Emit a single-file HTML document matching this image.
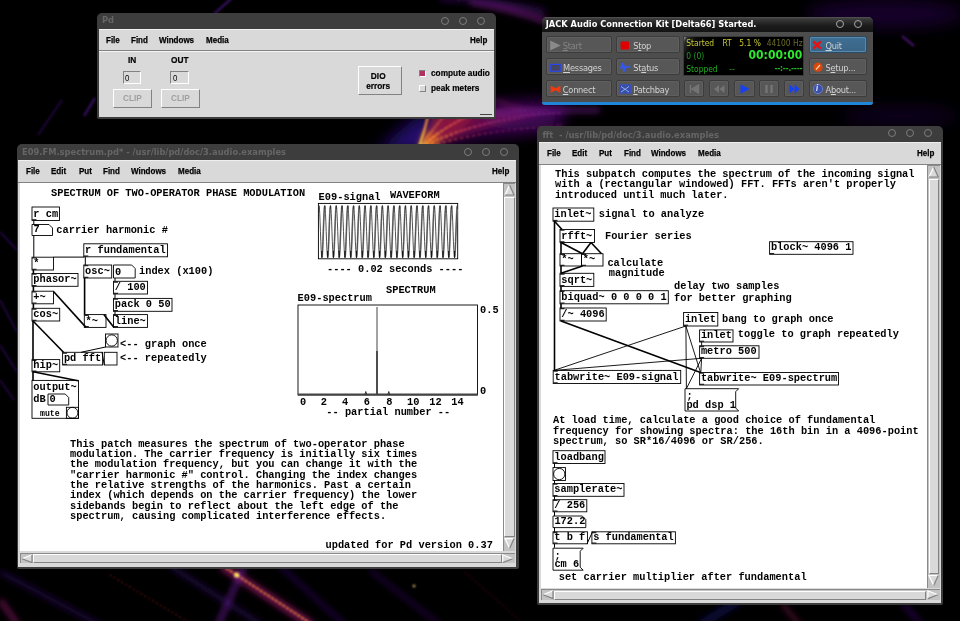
<!DOCTYPE html>
<html><head><meta charset="utf-8"><title>desktop</title>
<style>
html,body{margin:0;padding:0;}
body{width:960px;height:621px;overflow:hidden;background:#000;position:relative;font-family:"Liberation Sans",sans-serif;}
.abs,.abs div,.abs svg{position:absolute;box-sizing:border-box;}
.bg{left:0;top:0;width:960px;height:621px;overflow:hidden;}
.win{background:#3d3d3d;border-radius:5px 5px 2px 2px;}
.ttl{color:#666;font:bold 9.27px "DejaVu Sans Condensed","DejaVu Sans",sans-serif;font-stretch:condensed;white-space:pre;line-height:12px;}
.circ{width:8.2px;height:8.2px;border:1.9px solid #7c7c7c;border-radius:50%;}
.mbar{background:#d9d9d9;border-bottom:1px solid #828282;border-top:1px solid #efefef;}
.mi{font:bold 9px "Liberation Sans",sans-serif;color:#000;white-space:nowrap;line-height:10px;transform-origin:0 0;transform:scaleX(.89);-webkit-text-stroke:0.25px #000;}
.cv{background:#fff;}
.sb{background:#c3c3c3;}
.gray{background:#d9d9d9;}
.raised{background:#d9d9d9;border:1.5px solid;border-color:#fff #828282 #828282 #fff;}
.sunken{background:#d9d9d9;border:1.5px solid;border-color:#828282 #fff #fff #828282;}
.lbl{font:bold 9px "Liberation Sans",sans-serif;color:#000;white-space:nowrap;line-height:10px;transform-origin:0 0;transform:scaleX(.92);-webkit-text-stroke:0.2px #000;}
svg text.m{font:bold 10.33px "Liberation Mono",monospace;fill:#000;white-space:pre;}
svg text.ms{font:bold 8.2px "Liberation Mono",monospace;fill:#000;white-space:pre;}
svg .b{fill:none;stroke:#000;stroke-width:0.9;}
.jb{background:#575757;border:1px solid #3c3c3c;border-radius:2px;box-shadow:inset 0 0 0 1px #5f5f5f;}
.jt{letter-spacing:-0.25px;font:9.2px "DejaVu Sans Condensed","DejaVu Sans",sans-serif;font-stretch:condensed;color:#d0d0d0;white-space:nowrap;line-height:11px;}
.jd{font:8.4px "DejaVu Sans Condensed","DejaVu Sans",sans-serif;font-stretch:condensed;white-space:nowrap;line-height:10px;}
</style></head><body>
<div class="abs bg">
<svg width="960" height="621" viewBox="0 0 960 621" style="left:0;top:0;">
<defs>
<filter id="b1" x="-20%" y="-20%" width="140%" height="140%"><feGaussianBlur stdDeviation="1"/></filter>
<filter id="b3" x="-20%" y="-20%" width="140%" height="140%"><feGaussianBlur stdDeviation="3"/></filter>
<filter id="b8" x="-30%" y="-30%" width="160%" height="160%"><feGaussianBlur stdDeviation="8"/></filter>
<radialGradient id="g1" cx="0" cy="1" r="1"><stop offset="0" stop-color="#ff9a10" stop-opacity=".95"/><stop offset=".18" stop-color="#e0304a" stop-opacity=".8"/><stop offset=".45" stop-color="#8a1080" stop-opacity=".6"/><stop offset=".8" stop-color="#3a0878" stop-opacity=".35"/><stop offset="1" stop-color="#200050" stop-opacity="0"/></radialGradient>
<radialGradient id="gs" gradientUnits="userSpaceOnUse" cx="419" cy="148" r="150"><stop offset="0" stop-color="#ffe050"/><stop offset=".12" stop-color="#ffb030"/><stop offset=".28" stop-color="#f0604a"/><stop offset=".5" stop-color="#d03a78"/><stop offset="1" stop-color="#9a2a90"/></radialGradient>
</defs>
<!-- fan of streaks between Pd and E09 windows -->
<g filter="url(#b8)">
 <path d="M425,150 L470,104 L565,98 L565,126 L520,134 Z" fill="#4a0a6a" opacity=".6"/>
 <path d="M375,152 L415,118 L450,112 L430,152 Z" fill="#2a0a80" opacity=".85"/>
</g>
<g filter="url(#b3)">
 <path d="M422,148 L440,112 L500,110 L540,114 L470,134 Z" fill="#a01850" opacity=".5"/>
 <path d="M418,150 L424,132 L440,134 L436,150 Z" fill="#ff8a18" opacity=".8"/>
 <path d="M420,148 L432,114 L480,112 L450,140 Z" fill="#b0203a" opacity=".5"/>
</g>
<g filter="url(#b1)" fill="none" stroke-linecap="round">
 <path d="M419,147 Q425,130 429,112" stroke="url(#gs)" stroke-width="2.2" opacity=".95"/>
 <path d="M421,147 Q440,130 466,117" stroke="url(#gs)" stroke-width="1.5" opacity=".9" stroke-dasharray="3 2"/>
 <path d="M420,147 Q432,130 446,114" stroke="url(#gs)" stroke-width="1.3" opacity=".8" stroke-dasharray="2 2"/>
 <path d="M423,147 Q452,130 500,121 T560,113" stroke="url(#gs)" stroke-width="1.4" opacity=".8" stroke-dasharray="2 3"/>
 <path d="M426,147 Q470,134 520,129 T560,125" stroke="url(#gs)" stroke-width="1.3" opacity=".65" stroke-dasharray="2 4"/>
 <path d="M440,140 Q480,122 540,112" stroke="url(#gs)" stroke-width="1.2" opacity=".55" stroke-dasharray="2 4"/>
</g>
<!-- faint haze -->
<g filter="url(#b8)">
 <ellipse cx="885" cy="14" rx="80" ry="14" fill="#2a0850" opacity=".55"/>
 <ellipse cx="900" cy="116" rx="60" ry="9" fill="#2a0850" opacity=".4"/>
 <ellipse cx="520" cy="118" rx="40" ry="12" fill="#5a1070" opacity=".5"/>
</g>
<!-- top streaks between Pd and JACK -->
<g filter="url(#b3)" fill="none">
 <path d="M470,2 Q510,8 548,22" stroke="#8a209a" stroke-width="5" opacity=".65"/>
 <path d="M496,100 Q520,112 545,110" stroke="#a02a7a" stroke-width="3" opacity=".5"/>
 <path d="M440,-2 Q500,0 545,12" stroke="#4a0f80" stroke-width="6" opacity=".5"/>
 <path d="M493,114 Q530,110 600,110" stroke="#7a1a9a" stroke-width="5" opacity=".6"/>
</g>
<path d="M232,-2 L214,14 M95,98 L84,116" stroke="#5a1aa0" stroke-width="2.5" opacity=".55" filter="url(#b1)" fill="none"/>
<path d="M902,36 L914,46" stroke="#6a1aa0" stroke-width="2.5" opacity=".6" filter="url(#b1)"/>
<path d="M62,100 L38,135 M0,300 L17,332 M0,232 L17,250 M0,345 L17,372 M0,380 L14,400" stroke="#4a1090" stroke-width="2" opacity=".45" filter="url(#b1)" fill="none"/>
<!-- bottom streaks -->
<g filter="url(#b3)" fill="none">
 <path d="M222,566 L312,625" stroke="#a01a70" stroke-width="7" opacity=".8"/>
 <path d="M244,566 L218,625" stroke="#7a24b0" stroke-width="4" opacity=".75"/>
 <path d="M0,572 L100,625" stroke="#4a1898" stroke-width="3" opacity=".65"/>
 <path d="M170,566 L262,625" stroke="#4a1898" stroke-width="3" opacity=".65"/>
 <path d="M280,566 L345,625" stroke="#4a1898" stroke-width="3" opacity=".6"/>
 <path d="M370,570 L440,625" stroke="#4a1090" stroke-width="3" opacity=".5"/>
 <path d="M0,600 L18,625" stroke="#c0208a" stroke-width="4" opacity=".6"/>
 <path d="M700,625 L740,600" stroke="#1a1a70" stroke-width="8" opacity=".5"/>
 <path d="M782,604 L800,625" stroke="#a02060" stroke-width="3" opacity=".6"/>
 <path d="M903,604 L922,625" stroke="#4a1090" stroke-width="4" opacity=".55"/>
</g>
<g filter="url(#b1)" fill="none">
 <path d="M226,568 L310,623" stroke="#ffa030" stroke-width="1.8" opacity=".9" stroke-dasharray="3 1.5"/>
 <path d="M110,575 L190,623" stroke="#c03030" stroke-width="1.2" opacity=".7" stroke-dasharray="1.5 3"/>
 <path d="M465,572 L520,621" stroke="#a02040" stroke-width="1.2" opacity=".55" stroke-dasharray="1.5 3"/>
 <circle cx="236.7" cy="575" r="2.6" fill="#ffe060" stroke="none"/>
 <circle cx="414" cy="586" r="1.2" fill="#ffd080" stroke="none"/>
</g>
</svg>
</div>

<!-- ===== Pd main window ===== -->
<div class="abs win" style="left:97px;top:13px;width:399px;height:106px;">
 <div class="ttl" style="left:5px;top:1.4px;">Pd</div>
 <div class="circ" style="left:344px;top:3.5px;"></div>
 <div class="circ" style="left:362px;top:3.5px;"></div>
 <div class="circ" style="left:380px;top:3.5px;"></div>
 <div class="gray" style="left:2px;top:15.6px;width:394.6px;height:88px;"></div>
 <div class="mbar" style="left:2px;top:15.6px;width:394.6px;height:22.6px;"></div>
 <div style="left:2px;top:38.2px;width:394.6px;height:1px;background:#f4f4f4;"></div>
 <div class="mi" style="left:9.3px;top:22px;">File</div>
 <div class="mi" style="left:34.3px;top:22px;">Find</div>
 <div class="mi" style="left:61.8px;top:22px;">Windows</div>
 <div class="mi" style="left:109.3px;top:22px;">Media</div>
 <div class="mi" style="left:372.5px;top:22px;">Help</div>
 <div class="lbl" style="left:31px;top:41.6px;">IN</div>
 <div class="lbl" style="left:74.3px;top:41.6px;">OUT</div>
 <div class="sunken" style="left:25.5px;top:57.5px;width:18.6px;height:13.6px;"></div>
 <div class="sunken" style="left:73px;top:57.5px;width:18.6px;height:13.6px;"></div>
 <div class="lbl" style="left:28.2px;top:59.6px;font-size:8.5px;font-weight:normal;-webkit-text-stroke:0;">0</div>
 <div class="lbl" style="left:75.7px;top:59.6px;font-size:8.5px;font-weight:normal;-webkit-text-stroke:0;">0</div>
 <div class="raised" style="left:16px;top:75.7px;width:38.5px;height:19px;"></div>
 <div class="raised" style="left:64.2px;top:75.7px;width:38.5px;height:19px;"></div>
 <div class="lbl" style="left:25.8px;top:80px;color:#a0a0a0;font-weight:bold;-webkit-text-stroke:0;">CLIP</div>
 <div class="lbl" style="left:74px;top:80px;color:#a0a0a0;font-weight:bold;-webkit-text-stroke:0;">CLIP</div>
 <div class="raised" style="left:260.5px;top:53.2px;width:44px;height:29px;"></div>
 <div class="lbl" style="left:260.5px;top:57.5px;width:44px;text-align:center;">DIO</div>
 <div class="lbl" style="left:260.5px;top:67.5px;width:44px;text-align:center;">errors</div>
 <div style="left:321.9px;top:57px;width:7.2px;height:7.4px;background:#b03060;border:1.2px solid;border-color:#828282 #fff #fff #828282;"></div>
 <div style="left:321.9px;top:72px;width:7.2px;height:7.4px;background:#d9d9d9;border:1.2px solid;border-color:#fff #828282 #828282 #fff;"></div>
 <div class="lbl" style="left:333.7px;top:54.8px;">compute audio</div>
 <div class="lbl" style="left:333.7px;top:70px;">peak meters</div>
 <div style="left:383px;top:100.8px;width:12px;height:1.6px;background:#444;"></div>
</div>

<!-- ===== JACK window ===== -->
<div class="abs" style="left:541.8px;top:16.8px;width:331.2px;height:87.8px;background:#4d4d4d;border-radius:5px 5px 3px 3px;overflow:hidden;">
 <div style="left:0;top:0;width:331px;height:15.2px;background:linear-gradient(#555 0,#3a3a3a 12%,#1b1b1b 60%,#141414 100%);"></div>
 <div style="left:0;top:84.9px;width:332px;height:3px;background:#1f86d8;"></div>
 <div style="left:4px;top:1.5px;font:bold 9.2px 'DejaVu Sans Condensed','DejaVu Sans',sans-serif;font-stretch:condensed;color:#fff;white-space:nowrap;line-height:12px;">JACK Audio Connection Kit [Delta66] Started.</div>
 <div class="circ" style="left:294.2px;top:2.8px;border-color:#a8a8a8;border-width:1.9px;width:8.2px;height:8.2px;"></div>
 <div class="circ" style="left:312.3px;top:2.8px;border-color:#a8a8a8;border-width:1.9px;width:8.2px;height:8.2px;"></div>
 <div class="jb" style="left:4px;top:19.1px;width:66.0px;height:17.4px;"></div>
<div class="jb" style="left:74.5px;top:19.1px;width:63.5px;height:17.4px;"></div>
<div class="jb" style="left:267px;top:19.1px;width:58.5px;height:17.4px;"></div>
<div class="jb" style="left:4px;top:41.3px;width:66.0px;height:17.2px;"></div>
<div class="jb" style="left:74.5px;top:41.3px;width:63.5px;height:17.2px;"></div>
<div class="jb" style="left:267px;top:41.3px;width:58.5px;height:17.2px;"></div>
<div class="jb" style="left:4px;top:63.3px;width:66.0px;height:17.1px;"></div>
<div class="jb" style="left:74.5px;top:63.3px;width:63.5px;height:17.1px;"></div>
<div class="jb" style="left:267px;top:63.3px;width:58.5px;height:17.1px;"></div>
<div class="jb" style="left:267px;top:19.1px;width:58.5px;height:17.4px;background:linear-gradient(#3f6f94,#3a6485);border-color:#2c4a60;box-shadow:inset 0 0 0 1px #5689ad;"></div>
<div class="jb" style="left:142px;top:63.3px;width:20.5px;height:17.1px;"></div>
<div class="jb" style="left:167.7px;top:63.3px;width:20.0px;height:17.1px;"></div>
<div class="jb" style="left:192.7px;top:63.3px;width:20.1px;height:17.1px;"></div>
<div class="jb" style="left:217.3px;top:63.3px;width:20.3px;height:17.1px;"></div>
<div class="jb" style="left:242px;top:63.3px;width:20.5px;height:17.1px;"></div>
<div class="jt" style="left:21px;top:23.0px;color:#858585;"><u>S</u>tart</div>
<div class="jt" style="left:91.5px;top:23.0px;color:#d2d2d2;">S<u>t</u>op</div>
<div class="jt" style="left:21.3px;top:45.2px;color:#d2d2d2;"><u>M</u>essages</div>
<div class="jt" style="left:91.5px;top:45.2px;color:#d2d2d2;">St<u>a</u>tus</div>
<div class="jt" style="left:21px;top:67.2px;color:#d2d2d2;"><u>C</u>onnect</div>
<div class="jt" style="left:91.5px;top:67.2px;color:#d2d2d2;"><u>P</u>atchbay</div>
<div class="jt" style="left:283.7px;top:23.0px;color:#d2d2d2;"><u>Q</u>uit</div>
<div class="jt" style="left:283.7px;top:45.2px;color:#d2d2d2;">S<u>e</u>tup...</div>
<div class="jt" style="left:283.7px;top:67.2px;color:#d2d2d2;">A<u>b</u>out...</div>
<div style="left:141.7px;top:18.8px;width:120.8px;height:40px;background:linear-gradient(120deg,#9aa09a 0,#2a2d2a 2.5%,#0a0a0a 9%,#000 20%);border:1px solid #3a3a3a;"></div>
<div class="jd" style="left:144.5px;top:21.7px;color:#c9c934;">Started</div>
<div class="jd" style="left:180.7px;top:21.7px;color:#c9c934;">RT</div>
<div class="jd" style="left:197.5px;top:21.7px;color:#c9c934;">5.1 %</div>
<div class="jd" style="left:224.9px;top:21.7px;color:#6c6c2c;">44100 Hz</div>
<div class="jd" style="left:144.5px;top:34.2px;color:#1f9d1f;">0 (0)</div>
<div class="jd" style="left:144.5px;top:47.0px;color:#22b022;">Stopped</div>
<div class="jd" style="left:187.5px;top:47.0px;color:#22b022;">--</div>
<div style="left:189.5px;top:30px;width:71px;text-align:right;font:bold 12px 'DejaVu Sans',sans-serif;font-stretch:condensed;color:#2eea2e;line-height:16px;white-space:nowrap;">00:00:00</div>
<div class="jd" style="left:199.5px;top:46.5px;width:61px;text-align:right;color:#22b022;font-weight:bold;letter-spacing:-0.3px;">--:--.----</div>
<svg style="left:0;top:0;" width="331" height="86"><polygon points="8.2,23.6 8.2,33.4 18.6,28.5" fill="#8a8a8a"/><rect x="78.6" y="24.4" width="8.4" height="8.2" rx="1" fill="#e00000"/><rect x="8.8" y="47.4" width="9.4" height="6.8" fill="#43465e" stroke="#2a44f0" stroke-width="1.2"/><path d="M77,50.5 L79.5,50.5 L80.6,46 L81.8,55 L83.2,48.5 L84,50.5 L88.5,49.5" fill="none" stroke="#2f58ff" stroke-width="1.4"/><path d="M8.5,69.5 L18.5,75 M8.5,75 L18.5,69.5 M8.5,72.2 L18.5,72.2" stroke="#f03a10" stroke-width="1.7" fill="none"/><rect x="77.8" y="68" width="10.5" height="8" fill="#3b4e9a" stroke="#2f4fe0" stroke-width="1"/><path d="M79,69.5 L87,75 M79,75 L87,69.5" stroke="#8fa8ff" stroke-width="1"/><path d="M271.3,24.4 L278.8,31.6 M278.8,24.4 L271.3,31.6" stroke="#e81010" stroke-width="2.3" fill="none"/><circle cx="276" cy="50.2" r="4.6" fill="#d8480c"/><path d="M274,52.5 L278,48" stroke="#ffd0a0" stroke-width="1.2"/><circle cx="276" cy="72" r="4.6" fill="#3c50a8" stroke="#6f86e0" stroke-width=".8"/><path d="M148.5,68 L148.5,76 M156.5,68 L150,72 L156.5,76 Z" fill="#747474" stroke="#747474" stroke-width="1.4"/><path d="M177,68 L172,72 L177,76 Z M182.5,68 L177.5,72 L182.5,76 Z" fill="#747474"/><polygon points="198.5,67.2 198.5,76.8 207.5,72" fill="#1640f4"/><path d="M224.5,68 L224.5,76 M229.5,68 L229.5,76" stroke="#747474" stroke-width="2.4"/><path d="M247.5,67.5 L252.5,72 L247.5,76.5 Z M252.5,67.5 L257.5,72 L252.5,76.5 Z" fill="#1640f4"/></svg>
<div class="jt" style="left:273.9px;top:66.3px;color:#cfd6ff;font-size:8px;font-style:italic;font-weight:bold;">i</div>
</div>

<!-- ===== E09 window ===== -->
<div class="abs win" style="left:16.8px;top:144px;width:501.8px;height:424.7px;">
<div class="ttl" style="left:5.2px;top:2.4px;">E09.FM.spectrum.pd* - /usr/lib/pd/doc/3.audio.examples</div>
<div class="circ" style="left:446.9px;top:3.7px;"></div>
<div class="circ" style="left:464.9px;top:3.7px;"></div>
<div class="circ" style="left:482.9px;top:3.7px;"></div>
<div class="gray" style="left:1.7px;top:16.0px;width:497.5px;height:406.8px;"></div>
<div class="mbar" style="left:1.7px;top:16.0px;width:497.5px;height:22.5px;"></div>
<div class="mi" style="left:9.6px;top:22.0px;">File</div>
<div class="mi" style="left:34.6px;top:22.0px;">Edit</div>
<div class="mi" style="left:62.0px;top:22.0px;">Put</div>
<div class="mi" style="left:86.5px;top:22.0px;">Find</div>
<div class="mi" style="left:114.0px;top:22.0px;">Windows</div>
<div class="mi" style="left:161.2px;top:22.0px;">Media</div>
<div class="mi" style="left:475.7px;top:22.0px;">Help</div>
<div class="cv" style="left:3.7px;top:39.3px;width:482.5px;height:368.1px;"></div>
<div class="sb" style="left:486.2px;top:39.3px;width:12.2px;height:368.1px;border-left:1px solid #8a8a8a;border-top:1px solid #8a8a8a;"></div>
<div class="raised" style="left:487.7px;top:52.8px;width:10.4px;height:340.1px;border-width:1px;"></div>
<svg style="left:486.2px;top:39.3px;" width="12.2" height="368.1"><path d="M6.6,2 L11.0,12 L2,12 Z" fill="#d9d9d9"/><path d="M6.6,2 L2,12" stroke="#fff" stroke-width="1.2" fill="none"/><path d="M2,12 L11.0,12 L6.6,2" stroke="#828282" stroke-width="1.2" fill="none"/><path d="M2,355.6 L11.0,355.6 L6.6,365.6 Z" fill="#d9d9d9"/><path d="M6.6,365.6 L2,355.6 L11.0,355.6" stroke="#fff" stroke-width="1.2" fill="none"/><path d="M11.0,355.6 L6.6,365.6" stroke="#828282" stroke-width="1.2" fill="none"/></svg>
<div class="sb" style="left:3.7px;top:408.6px;width:494.7px;height:10.6px;border-top:1px solid #8a8a8a;border-left:1px solid #8a8a8a;"></div>
<div class="raised" style="left:16.7px;top:409.9px;width:468.5px;height:9.0px;border-width:1px;"></div>
<svg style="left:3.7px;top:408.6px;" width="494.7" height="10.6"><path d="M2,5.8 L12,1.8 L12,9.6 Z" fill="#d9d9d9"/><path d="M2,5.8 L12,1.8" stroke="#fff" stroke-width="1.2" fill="none"/><path d="M12,1.8 L12,9.6 L2,5.8" stroke="#828282" stroke-width="1.2" fill="none"/><path d="M492.7,5.8 L482.7,1.8 L482.7,9.6 Z" fill="#d9d9d9"/><path d="M482.7,9.6 L482.7,1.8 L492.7,5.8" stroke="#fff" stroke-width="1.2" fill="none"/><path d="M492.7,5.8 L482.7,9.6" stroke="#828282" stroke-width="1.2" fill="none"/></svg>
</div>
<!-- ===== fft window ===== -->
<div class="abs win" style="left:537.2px;top:126.4px;width:405.6px;height:478.3px;">
<div class="ttl" style="left:5.3px;top:2.4px;">fft  - /usr/lib/pd/doc/3.audio.examples</div>
<div class="circ" style="left:350.9px;top:2.9px;"></div>
<div class="circ" style="left:368.9px;top:2.9px;"></div>
<div class="circ" style="left:386.7px;top:2.9px;"></div>
<div class="gray" style="left:1.7px;top:16.0px;width:401.7px;height:460.2px;"></div>
<div class="mbar" style="left:1.7px;top:16.0px;width:401.7px;height:22.2px;"></div>
<div class="mi" style="left:9.6px;top:21.8px;">File</div>
<div class="mi" style="left:34.6px;top:21.8px;">Edit</div>
<div class="mi" style="left:61.6px;top:21.8px;">Put</div>
<div class="mi" style="left:86.6px;top:21.8px;">Find</div>
<div class="mi" style="left:114.1px;top:21.8px;">Windows</div>
<div class="mi" style="left:161.1px;top:21.8px;">Media</div>
<div class="mi" style="left:379.5px;top:21.8px;">Help</div>
<div class="cv" style="left:3.8px;top:38.9px;width:386.4px;height:423.0px;"></div>
<div class="sb" style="left:390.2px;top:38.9px;width:12.4px;height:423.0px;border-left:1px solid #8a8a8a;border-top:1px solid #8a8a8a;"></div>
<div class="raised" style="left:391.7px;top:52.4px;width:10.6px;height:395.0px;border-width:1px;"></div>
<svg style="left:390.2px;top:38.9px;" width="12.4" height="423.0"><path d="M6.7,2 L11.2,12 L2,12 Z" fill="#d9d9d9"/><path d="M6.7,2 L2,12" stroke="#fff" stroke-width="1.2" fill="none"/><path d="M2,12 L11.2,12 L6.7,2" stroke="#828282" stroke-width="1.2" fill="none"/><path d="M2,410.5 L11.2,410.5 L6.7,420.5 Z" fill="#d9d9d9"/><path d="M6.7,420.5 L2,410.5 L11.2,410.5" stroke="#fff" stroke-width="1.2" fill="none"/><path d="M11.2,410.5 L6.7,420.5" stroke="#828282" stroke-width="1.2" fill="none"/></svg>
<div class="sb" style="left:3.7px;top:463.1px;width:398.9px;height:10.6px;border-top:1px solid #8a8a8a;border-left:1px solid #8a8a8a;"></div>
<div class="raised" style="left:16.7px;top:464.4px;width:372.5px;height:9.0px;border-width:1px;"></div>
<svg style="left:3.7px;top:463.1px;" width="398.9" height="10.6"><path d="M2,5.8 L12,1.8 L12,9.6 Z" fill="#d9d9d9"/><path d="M2,5.8 L12,1.8" stroke="#fff" stroke-width="1.2" fill="none"/><path d="M12,1.8 L12,9.6 L2,5.8" stroke="#828282" stroke-width="1.2" fill="none"/><path d="M396.9,5.8 L386.9,1.8 L386.9,9.6 Z" fill="#d9d9d9"/><path d="M386.9,9.6 L386.9,1.8 L396.9,5.8" stroke="#fff" stroke-width="1.2" fill="none"/><path d="M396.9,5.8 L386.9,9.6" stroke="#828282" stroke-width="1.2" fill="none"/></svg>
</div>

<svg class="abs" style="left:0;top:0;position:absolute;" width="960" height="621" viewBox="0 0 960 621">
<text class="m" x="51.00" y="195.60">SPECTRUM OF TWO-OPERATOR PHASE MODULATION</text>
<rect class="b" x="32.00" y="207.00" width="27.50" height="13.50"/>
<path d="M32.00,219.80 h4.5" stroke="#222" stroke-width="1.3" fill="none"/>
<text class="m" x="33.30" y="216.60">r cm</text>
<polygon class="b" points="32.00,224.50 49.00,224.50 52.50,228.00 52.50,235.50 32.00,235.50"/>
<text class="m" x="33.40" y="232.30">7</text>
<text class="m" x="56.30" y="232.90">carrier harmonic #</text>
<rect class="b" x="83.80" y="243.80" width="83.70" height="13.00"/>
<path d="M83.80,256.10 h4.5" stroke="#222" stroke-width="1.3" fill="none"/>
<text class="m" x="85.10" y="252.90">r fundamental</text>
<rect class="b" x="32.00" y="257.20" width="21.50" height="12.80"/>
<path d="M32.00,269.30 h4.5 M32.00,257.90 h4.5" stroke="#222" stroke-width="1.3" fill="none"/>
<text class="m" x="33.30" y="266.10">*</text>
<rect class="b" x="32.00" y="273.50" width="46.00" height="12.80"/>
<path d="M32.00,285.60 h4.5 M32.00,274.20 h4.5" stroke="#222" stroke-width="1.3" fill="none"/>
<text class="m" x="33.30" y="282.40">phasor~</text>
<rect class="b" x="32.00" y="291.20" width="21.50" height="12.60"/>
<path d="M32.00,303.10 h4.5 M32.00,291.90 h4.5" stroke="#222" stroke-width="1.3" fill="none"/>
<text class="m" x="33.30" y="299.90">+~</text>
<rect class="b" x="32.00" y="308.30" width="27.70" height="12.70"/>
<path d="M32.00,320.30 h4.5 M32.00,309.00 h4.5" stroke="#222" stroke-width="1.3" fill="none"/>
<text class="m" x="33.30" y="317.10">cos~</text>
<rect class="b" x="83.80" y="265.00" width="27.90" height="13.00"/>
<path d="M83.80,277.30 h4.5 M83.80,265.70 h4.5" stroke="#222" stroke-width="1.3" fill="none"/>
<text class="m" x="85.10" y="274.10">osc~</text>
<polygon class="b" points="113.50,265.00 131.70,265.00 135.20,268.50 135.20,278.00 113.50,278.00"/>
<text class="m" x="114.90" y="274.80">0</text>
<text class="m" x="139.00" y="274.40">index (x100)</text>
<rect class="b" x="113.50" y="281.30" width="34.00" height="12.70"/>
<path d="M113.50,293.30 h4.5 M113.50,282.00 h4.5" stroke="#222" stroke-width="1.3" fill="none"/>
<text class="m" x="114.80" y="290.10">/ 100</text>
<rect class="b" x="113.50" y="298.40" width="58.50" height="12.90"/>
<path d="M113.50,310.60 h4.5 M113.50,299.10 h4.5" stroke="#222" stroke-width="1.3" fill="none"/>
<text class="m" x="114.80" y="307.40">pack 0 50</text>
<rect class="b" x="84.30" y="314.60" width="21.70" height="12.80"/>
<path d="M84.30,326.70 h4.5 M84.30,315.30 h4.5" stroke="#222" stroke-width="1.3" fill="none"/>
<text class="m" x="85.60" y="323.50">*~</text>
<rect class="b" x="113.50" y="314.60" width="34.00" height="12.80"/>
<path d="M113.50,326.70 h4.5 M113.50,315.30 h4.5" stroke="#222" stroke-width="1.3" fill="none"/>
<text class="m" x="114.80" y="323.50">line~</text>
<rect class="b" x="105.50" y="334.00" width="12.50" height="13.00"/>
<circle class="b" cx="111.75" cy="340.50" r="5.65"/>
<text class="m" x="120.00" y="347.00">&lt;-- graph once</text>
<rect class="b" x="62.60" y="352.30" width="40.00" height="12.70"/>
<path d="M62.60,364.30 h4.5 M62.60,353.00 h4.5" stroke="#222" stroke-width="1.3" fill="none"/>
<text class="m" x="63.90" y="361.10">pd fft</text>
<rect class="b" x="104.30" y="352.30" width="12.70" height="12.70"/>
<text class="m" x="120.00" y="360.70">&lt;-- repeatedly</text>
<rect class="b" x="32.00" y="359.60" width="27.70" height="12.20"/>
<path d="M32.00,371.10 h4.5 M32.00,360.30 h4.5" stroke="#222" stroke-width="1.3" fill="none"/>
<text class="m" x="33.30" y="367.90">hip~</text>
<rect class="b" x="32" y="380.4" width="46.5" height="37.9"/>
<text class="m" x="33.30" y="389.80">output~</text>
<text class="m" x="33.30" y="402.40">dB</text>
<polygon class="b" points="48.00,394.00 65.20,394.00 68.70,397.50 68.70,405.00 48.00,405.00"/>
<text class="m" x="49.40" y="401.80">0</text>
<text class="ms" x="40.00" y="416.20">mute</text>
<rect class="b" x="66.40" y="407.30" width="12.10" height="11.00"/>
<circle class="b" cx="72.45" cy="412.80" r="5.45"/>
<line x1="33.80" y1="220.50" x2="33.80" y2="224.50" stroke="#000" stroke-width="1.0"/>
<line x1="33.80" y1="235.50" x2="33.80" y2="257.20" stroke="#000" stroke-width="1.0"/>
<line x1="85.30" y1="256.80" x2="85.30" y2="265.00" stroke="#000" stroke-width="1.0"/>
<line x1="84.30" y1="257.10" x2="53.50" y2="257.10" stroke="#000" stroke-width="1.0"/>
<line x1="33.40" y1="270.00" x2="33.40" y2="273.50" stroke="#000" stroke-width="1.6"/>
<line x1="33.40" y1="286.30" x2="33.40" y2="291.20" stroke="#000" stroke-width="1.6"/>
<line x1="33.40" y1="303.80" x2="33.40" y2="308.30" stroke="#000" stroke-width="1.6"/>
<line x1="84.60" y1="278.00" x2="84.60" y2="314.60" stroke="#000" stroke-width="1.6"/>
<line x1="115.00" y1="278.00" x2="115.00" y2="281.30" stroke="#000" stroke-width="1.0"/>
<line x1="115.00" y1="294.00" x2="115.00" y2="298.40" stroke="#000" stroke-width="1.0"/>
<line x1="115.00" y1="311.30" x2="115.00" y2="314.60" stroke="#000" stroke-width="1.0"/>
<line x1="114.00" y1="327.40" x2="104.00" y2="314.80" stroke="#000" stroke-width="1.6"/>
<line x1="53.50" y1="291.50" x2="86.00" y2="327.40" stroke="#000" stroke-width="1.6"/>
<line x1="33.00" y1="321.00" x2="33.00" y2="359.60" stroke="#000" stroke-width="1.6"/>
<line x1="33.00" y1="321.00" x2="63.50" y2="352.30" stroke="#000" stroke-width="1.6"/>
<line x1="105.50" y1="347.00" x2="81.00" y2="352.30" stroke="#000" stroke-width="1.0"/>
<line x1="104.30" y1="365.00" x2="102.00" y2="352.30" stroke="#000" stroke-width="1.0"/>
<line x1="33.00" y1="371.80" x2="33.00" y2="380.40" stroke="#000" stroke-width="1.6"/>
<line x1="33.00" y1="371.80" x2="78.00" y2="380.80" stroke="#000" stroke-width="1.6"/>
<text class="m" x="318.60" y="200.40">E09-signal</text>
<text class="m" x="390.00" y="198.40">WAVEFORM</text>
<rect class="b" x="318.4" y="203.4" width="139.3" height="55.4"/>
<path fill="none" stroke="#909090" stroke-width="1.7" d="M321.88,257.4 L322.24,255.4 L322.60,249.8 L322.96,241.5 L323.32,231.6 L323.69,221.7 L324.05,213.4 L324.41,207.8 L324.77,205.8 M327.65,257.4 L328.01,255.4 L328.37,249.8 L328.73,241.5 L329.09,231.6 L329.45,221.7 L329.81,213.4 L330.17,207.8 L330.53,205.8 M333.42,257.4 L333.78,255.4 L334.14,249.8 L334.50,241.5 L334.86,231.6 L335.22,221.7 L335.58,213.4 L335.94,207.8 L336.30,205.8 M339.18,257.4 L339.54,255.4 L339.90,249.8 L340.26,241.5 L340.62,231.6 L340.99,221.7 L341.35,213.4 L341.71,207.8 L342.07,205.8 M344.95,257.4 L345.31,255.4 L345.67,249.8 L346.03,241.5 L346.39,231.6 L346.75,221.7 L347.11,213.4 L347.47,207.8 L347.83,205.8 M350.72,257.4 L351.08,255.4 L351.44,249.8 L351.80,241.5 L352.16,231.6 L352.52,221.7 L352.88,213.4 L353.24,207.8 L353.60,205.8 M356.48,257.4 L356.84,255.4 L357.20,249.8 L357.56,241.5 L357.93,231.6 L358.29,221.7 L358.65,213.4 L359.01,207.8 L359.37,205.8 M362.25,257.4 L362.61,255.4 L362.97,249.8 L363.33,241.5 L363.69,231.6 L364.05,221.7 L364.41,213.4 L364.77,207.8 L365.13,205.8 M368.02,257.4 L368.38,255.4 L368.74,249.8 L369.10,241.5 L369.46,231.6 L369.82,221.7 L370.18,213.4 L370.54,207.8 L370.90,205.8 M373.78,257.4 L374.14,255.4 L374.50,249.8 L374.86,241.5 L375.23,231.6 L375.59,221.7 L375.95,213.4 L376.31,207.8 L376.67,205.8 M379.55,257.4 L379.91,255.4 L380.27,249.8 L380.63,241.5 L380.99,231.6 L381.35,221.7 L381.71,213.4 L382.07,207.8 L382.43,205.8 M385.32,257.4 L385.68,255.4 L386.04,249.8 L386.40,241.5 L386.76,231.6 L387.12,221.7 L387.48,213.4 L387.84,207.8 L388.20,205.8 M391.08,257.4 L391.44,255.4 L391.80,249.8 L392.16,241.5 L392.52,231.6 L392.89,221.7 L393.25,213.4 L393.61,207.8 L393.97,205.8 M396.85,257.4 L397.21,255.4 L397.57,249.8 L397.93,241.5 L398.29,231.6 L398.65,221.7 L399.01,213.4 L399.37,207.8 L399.73,205.8 M402.62,257.4 L402.98,255.4 L403.34,249.8 L403.70,241.5 L404.06,231.6 L404.42,221.7 L404.78,213.4 L405.14,207.8 L405.50,205.8 M408.38,257.4 L408.74,255.4 L409.10,249.8 L409.46,241.5 L409.82,231.6 L410.19,221.7 L410.55,213.4 L410.91,207.8 L411.27,205.8 M414.15,257.4 L414.51,255.4 L414.87,249.8 L415.23,241.5 L415.59,231.6 L415.95,221.7 L416.31,213.4 L416.67,207.8 L417.03,205.8 M419.92,257.4 L420.28,255.4 L420.64,249.8 L421.00,241.5 L421.36,231.6 L421.72,221.7 L422.08,213.4 L422.44,207.8 L422.80,205.8 M425.68,257.4 L426.04,255.4 L426.40,249.8 L426.76,241.5 L427.12,231.6 L427.49,221.7 L427.85,213.4 L428.21,207.8 L428.57,205.8 M431.45,257.4 L431.81,255.4 L432.17,249.8 L432.53,241.5 L432.89,231.6 L433.25,221.7 L433.61,213.4 L433.97,207.8 L434.33,205.8 M437.22,257.4 L437.58,255.4 L437.94,249.8 L438.30,241.5 L438.66,231.6 L439.02,221.7 L439.38,213.4 L439.74,207.8 L440.10,205.8 M442.98,257.4 L443.34,255.4 L443.70,249.8 L444.06,241.5 L444.42,231.6 L444.79,221.7 L445.15,213.4 L445.51,207.8 L445.87,205.8 M448.75,257.4 L449.11,255.4 L449.47,249.8 L449.83,241.5 L450.19,231.6 L450.55,221.7 L450.91,213.4 L451.27,207.8 L451.63,205.8 M454.52,257.4 L454.88,255.4 L455.24,249.8 L455.60,241.5 L455.96,231.6 L456.32,221.7 L456.68,213.4 L457.04,207.8 L457.40,205.8"/>
<polyline fill="none" stroke="#4a4a4a" stroke-width="0.95" stroke-linejoin="round" points="319.00,205.8 319.36,207.8 319.72,213.4 320.08,221.7 320.44,231.6 320.80,241.5 321.16,249.8 321.52,255.4 321.88,257.4 322.24,255.4 322.60,249.8 322.96,241.5 323.32,231.6 323.69,221.7 324.05,213.4 324.41,207.8 324.77,205.8 325.13,207.8 325.49,213.4 325.85,221.7 326.21,231.6 326.57,241.5 326.93,249.8 327.29,255.4 327.65,257.4 328.01,255.4 328.37,249.8 328.73,241.5 329.09,231.6 329.45,221.7 329.81,213.4 330.17,207.8 330.53,205.8 330.89,207.8 331.25,213.4 331.61,221.7 331.98,231.6 332.34,241.5 332.70,249.8 333.06,255.4 333.42,257.4 333.78,255.4 334.14,249.8 334.50,241.5 334.86,231.6 335.22,221.7 335.58,213.4 335.94,207.8 336.30,205.8 336.66,207.8 337.02,213.4 337.38,221.7 337.74,231.6 338.10,241.5 338.46,249.8 338.82,255.4 339.18,257.4 339.54,255.4 339.90,249.8 340.26,241.5 340.62,231.6 340.99,221.7 341.35,213.4 341.71,207.8 342.07,205.8 342.43,207.8 342.79,213.4 343.15,221.7 343.51,231.6 343.87,241.5 344.23,249.8 344.59,255.4 344.95,257.4 345.31,255.4 345.67,249.8 346.03,241.5 346.39,231.6 346.75,221.7 347.11,213.4 347.47,207.8 347.83,205.8 348.19,207.8 348.55,213.4 348.91,221.7 349.27,231.6 349.64,241.5 350.00,249.8 350.36,255.4 350.72,257.4 351.08,255.4 351.44,249.8 351.80,241.5 352.16,231.6 352.52,221.7 352.88,213.4 353.24,207.8 353.60,205.8 353.96,207.8 354.32,213.4 354.68,221.7 355.04,231.6 355.40,241.5 355.76,249.8 356.12,255.4 356.48,257.4 356.84,255.4 357.20,249.8 357.56,241.5 357.93,231.6 358.29,221.7 358.65,213.4 359.01,207.8 359.37,205.8 359.73,207.8 360.09,213.4 360.45,221.7 360.81,231.6 361.17,241.5 361.53,249.8 361.89,255.4 362.25,257.4 362.61,255.4 362.97,249.8 363.33,241.5 363.69,231.6 364.05,221.7 364.41,213.4 364.77,207.8 365.13,205.8 365.49,207.8 365.85,213.4 366.21,221.7 366.57,231.6 366.94,241.5 367.30,249.8 367.66,255.4 368.02,257.4 368.38,255.4 368.74,249.8 369.10,241.5 369.46,231.6 369.82,221.7 370.18,213.4 370.54,207.8 370.90,205.8 371.26,207.8 371.62,213.4 371.98,221.7 372.34,231.6 372.70,241.5 373.06,249.8 373.42,255.4 373.78,257.4 374.14,255.4 374.50,249.8 374.86,241.5 375.23,231.6 375.59,221.7 375.95,213.4 376.31,207.8 376.67,205.8 377.03,207.8 377.39,213.4 377.75,221.7 378.11,231.6 378.47,241.5 378.83,249.8 379.19,255.4 379.55,257.4 379.91,255.4 380.27,249.8 380.63,241.5 380.99,231.6 381.35,221.7 381.71,213.4 382.07,207.8 382.43,205.8 382.79,207.8 383.15,213.4 383.51,221.7 383.88,231.6 384.24,241.5 384.60,249.8 384.96,255.4 385.32,257.4 385.68,255.4 386.04,249.8 386.40,241.5 386.76,231.6 387.12,221.7 387.48,213.4 387.84,207.8 388.20,205.8 388.56,207.8 388.92,213.4 389.28,221.7 389.64,231.6 390.00,241.5 390.36,249.8 390.72,255.4 391.08,257.4 391.44,255.4 391.80,249.8 392.16,241.5 392.52,231.6 392.89,221.7 393.25,213.4 393.61,207.8 393.97,205.8 394.33,207.8 394.69,213.4 395.05,221.7 395.41,231.6 395.77,241.5 396.13,249.8 396.49,255.4 396.85,257.4 397.21,255.4 397.57,249.8 397.93,241.5 398.29,231.6 398.65,221.7 399.01,213.4 399.37,207.8 399.73,205.8 400.09,207.8 400.45,213.4 400.81,221.7 401.17,231.6 401.54,241.5 401.90,249.8 402.26,255.4 402.62,257.4 402.98,255.4 403.34,249.8 403.70,241.5 404.06,231.6 404.42,221.7 404.78,213.4 405.14,207.8 405.50,205.8 405.86,207.8 406.22,213.4 406.58,221.7 406.94,231.6 407.30,241.5 407.66,249.8 408.02,255.4 408.38,257.4 408.74,255.4 409.10,249.8 409.46,241.5 409.82,231.6 410.19,221.7 410.55,213.4 410.91,207.8 411.27,205.8 411.63,207.8 411.99,213.4 412.35,221.7 412.71,231.6 413.07,241.5 413.43,249.8 413.79,255.4 414.15,257.4 414.51,255.4 414.87,249.8 415.23,241.5 415.59,231.6 415.95,221.7 416.31,213.4 416.67,207.8 417.03,205.8 417.39,207.8 417.75,213.4 418.11,221.7 418.47,231.6 418.84,241.5 419.20,249.8 419.56,255.4 419.92,257.4 420.28,255.4 420.64,249.8 421.00,241.5 421.36,231.6 421.72,221.7 422.08,213.4 422.44,207.8 422.80,205.8 423.16,207.8 423.52,213.4 423.88,221.7 424.24,231.6 424.60,241.5 424.96,249.8 425.32,255.4 425.68,257.4 426.04,255.4 426.40,249.8 426.76,241.5 427.12,231.6 427.49,221.7 427.85,213.4 428.21,207.8 428.57,205.8 428.93,207.8 429.29,213.4 429.65,221.7 430.01,231.6 430.37,241.5 430.73,249.8 431.09,255.4 431.45,257.4 431.81,255.4 432.17,249.8 432.53,241.5 432.89,231.6 433.25,221.7 433.61,213.4 433.97,207.8 434.33,205.8 434.69,207.8 435.05,213.4 435.41,221.7 435.77,231.6 436.14,241.5 436.50,249.8 436.86,255.4 437.22,257.4 437.58,255.4 437.94,249.8 438.30,241.5 438.66,231.6 439.02,221.7 439.38,213.4 439.74,207.8 440.10,205.8 440.46,207.8 440.82,213.4 441.18,221.7 441.54,231.6 441.90,241.5 442.26,249.8 442.62,255.4 442.98,257.4 443.34,255.4 443.70,249.8 444.06,241.5 444.42,231.6 444.79,221.7 445.15,213.4 445.51,207.8 445.87,205.8 446.23,207.8 446.59,213.4 446.95,221.7 447.31,231.6 447.67,241.5 448.03,249.8 448.39,255.4 448.75,257.4 449.11,255.4 449.47,249.8 449.83,241.5 450.19,231.6 450.55,221.7 450.91,213.4 451.27,207.8 451.63,205.8 451.99,207.8 452.35,213.4 452.71,221.7 453.07,231.6 453.44,241.5 453.80,249.8 454.16,255.4 454.52,257.4 454.88,255.4 455.24,249.8 455.60,241.5 455.96,231.6 456.32,221.7 456.68,213.4 457.04,207.8 457.40,205.8"/>
<path fill="none" stroke="#111" stroke-width="1.1" d="M321.88,250.9 V257.7 M327.65,250.9 V257.7 M333.42,250.9 V257.7 M339.18,250.9 V257.7 M344.95,250.9 V257.7 M350.72,250.9 V257.7 M356.48,250.9 V257.7 M362.25,250.9 V257.7 M368.02,250.9 V257.7 M373.78,250.9 V257.7 M379.55,250.9 V257.7 M385.32,250.9 V257.7 M391.08,250.9 V257.7 M396.85,250.9 V257.7 M402.62,250.9 V257.7 M408.38,250.9 V257.7 M414.15,250.9 V257.7 M419.92,250.9 V257.7 M425.68,250.9 V257.7 M431.45,250.9 V257.7 M437.22,250.9 V257.7 M442.98,250.9 V257.7 M448.75,250.9 V257.7 M454.52,250.9 V257.7"/>
<path fill="none" stroke="#333" stroke-width="1" d="M319.00,205.5 V208.8 M324.77,205.5 V208.8 M330.53,205.5 V208.8 M336.30,205.5 V208.8 M342.07,205.5 V208.8 M347.83,205.5 V208.8 M353.60,205.5 V208.8 M359.37,205.5 V208.8 M365.13,205.5 V208.8 M370.90,205.5 V208.8 M376.67,205.5 V208.8 M382.43,205.5 V208.8 M388.20,205.5 V208.8 M393.97,205.5 V208.8 M399.73,205.5 V208.8 M405.50,205.5 V208.8 M411.27,205.5 V208.8 M417.03,205.5 V208.8 M422.80,205.5 V208.8 M428.57,205.5 V208.8 M434.33,205.5 V208.8 M440.10,205.5 V208.8 M445.87,205.5 V208.8 M451.63,205.5 V208.8 M457.40,205.5 V208.8"/>
<text class="m" x="327.00" y="271.90">---- 0.02 seconds ----</text>
<text class="m" x="386.00" y="292.90">SPECTRUM</text>
<text class="m" x="297.60" y="300.70">E09-spectrum</text>
<rect class="b" x="298" y="305" width="179.5" height="90"/>
<line x1="298.00" y1="394.60" x2="477.50" y2="394.60" stroke="#444" stroke-width="2"/>
<line x1="377.00" y1="307.00" x2="377.00" y2="395.00" stroke="#444" stroke-width="1.0"/>
<line x1="377.00" y1="351.00" x2="377.00" y2="395.00" stroke="#444" stroke-width="1.8"/>
<path d="M364.8,395 L365.8,391.5 L366.8,395 M387.8,395 L388.8,391.5 L389.8,395" stroke="#333" fill="none" stroke-width="1"/>
<text class="m" x="480.00" y="312.90">0.5</text>
<text class="m" x="480.00" y="393.90">0</text>
<text class="m" x="300.00" y="404.90">0</text>
<text class="m" x="320.80" y="404.90">2</text>
<text class="m" x="342.00" y="404.90">4</text>
<text class="m" x="363.80" y="404.90">6</text>
<text class="m" x="386.20" y="404.90">8</text>
<text class="m" x="407.00" y="404.90">10</text>
<text class="m" x="429.30" y="404.90">12</text>
<text class="m" x="451.30" y="404.90">14</text>
<text class="m" x="326.30" y="414.90">-- partial number --</text>
<text class="m" x="70.00" y="446.70">This patch measures the spectrum of two-operator phase</text>
<text class="m" x="70.00" y="457.03">modulation. The carrier frequency is initially six times</text>
<text class="m" x="70.00" y="467.36">the modulation frequency, but you can change it with the</text>
<text class="m" x="70.00" y="477.69">"carrier harmonic #" control. Changing the index changes</text>
<text class="m" x="70.00" y="488.02">the relative strengths of the harmonics. Past a certain</text>
<text class="m" x="70.00" y="498.35">index (which depends on the carrier frequency) the lower</text>
<text class="m" x="70.00" y="508.68">sidebands begin to reflect about the left edge of the</text>
<text class="m" x="70.00" y="519.01">spectrum, causing complicated interference effects.</text>
<text class="m" x="325.50" y="547.90">updated for Pd version 0.37</text>
<text class="m" x="555.00" y="176.90">This subpatch computes the spectrum of the incoming signal</text>
<text class="m" x="555.00" y="187.25">with a (rectangular windowed) FFT. FFTs aren't properly</text>
<text class="m" x="555.00" y="197.60">introduced until much later.</text>
<rect class="b" x="553.00" y="208.00" width="40.80" height="13.20"/>
<path d="M553.00,220.50 h4.5" stroke="#222" stroke-width="1.3" fill="none"/>
<text class="m" x="554.30" y="217.30">inlet~</text>
<text class="m" x="598.80" y="217.20">signal to analyze</text>
<rect class="b" x="560.00" y="229.50" width="34.50" height="13.00"/>
<path d="M560.00,241.80 h4.5 M560.00,230.20 h4.5" stroke="#222" stroke-width="1.3" fill="none"/>
<text class="m" x="561.30" y="238.60">rfft~</text>
<text class="m" x="605.00" y="239.10">Fourier series</text>
<rect class="b" x="560.00" y="253.70" width="21.50" height="12.30"/>
<path d="M560.00,265.30 h4.5 M560.00,254.40 h4.5" stroke="#222" stroke-width="1.3" fill="none"/>
<text class="m" x="561.30" y="262.10">*~</text>
<rect class="b" x="581.50" y="253.70" width="21.50" height="12.30"/>
<path d="M581.50,265.30 h4.5 M581.50,254.40 h4.5" stroke="#222" stroke-width="1.3" fill="none"/>
<text class="m" x="582.80" y="262.10">*~</text>
<text class="m" x="607.40" y="265.50">calculate</text>
<text class="m" x="608.80" y="275.80">magnitude</text>
<rect class="b" x="560.00" y="273.30" width="33.80" height="13.10"/>
<path d="M560.00,285.70 h4.5 M560.00,274.00 h4.5" stroke="#222" stroke-width="1.3" fill="none"/>
<text class="m" x="561.30" y="282.50">sqrt~</text>
<rect class="b" x="560.00" y="290.70" width="108.30" height="13.10"/>
<path d="M560.00,303.10 h4.5 M560.00,291.40 h4.5" stroke="#222" stroke-width="1.3" fill="none"/>
<text class="m" x="561.30" y="299.90">biquad~ 0 0 0 0 1</text>
<text class="m" x="674.00" y="288.50">delay two samples</text>
<text class="m" x="674.00" y="301.20">for better graphing</text>
<rect class="b" x="560.00" y="308.00" width="46.20" height="13.00"/>
<path d="M560.00,320.30 h4.5 M560.00,308.70 h4.5" stroke="#222" stroke-width="1.3" fill="none"/>
<text class="m" x="561.30" y="317.10">/~ 4096</text>
<rect class="b" x="769.60" y="241.70" width="83.40" height="12.60"/>
<path d="M769.60,253.60 h4.5" stroke="#222" stroke-width="1.3" fill="none"/>
<text class="m" x="770.90" y="250.40">block~ 4096 1</text>
<rect class="b" x="683.60" y="312.50" width="34.20" height="13.50"/>
<path d="M683.60,325.30 h4.5" stroke="#222" stroke-width="1.3" fill="none"/>
<text class="m" x="684.90" y="322.10">inlet</text>
<text class="m" x="722.00" y="321.90">bang to graph once</text>
<rect class="b" x="699.60" y="329.90" width="33.40" height="12.10"/>
<path d="M699.60,341.30 h4.5" stroke="#222" stroke-width="1.3" fill="none"/>
<text class="m" x="700.90" y="338.10">inlet</text>
<text class="m" x="737.80" y="337.30">toggle to graph repeatedly</text>
<rect class="b" x="699.60" y="345.80" width="59.40" height="12.50"/>
<path d="M699.60,357.60 h4.5 M699.60,346.50 h4.5" stroke="#222" stroke-width="1.3" fill="none"/>
<text class="m" x="700.90" y="354.40">metro 500</text>
<rect class="b" x="553.20" y="370.40" width="127.50" height="13.10"/>
<path d="M553.20,382.80 h4.5 M553.20,371.10 h4.5" stroke="#222" stroke-width="1.3" fill="none"/>
<text class="m" x="554.50" y="379.60">tabwrite~ E09-signal</text>
<rect class="b" x="699.60" y="372.50" width="138.90" height="12.50"/>
<path d="M699.60,384.30 h4.5 M699.60,373.20 h4.5" stroke="#222" stroke-width="1.3" fill="none"/>
<text class="m" x="700.90" y="381.10">tabwrite~ E09-spectrum</text>
<polygon class="b" points="685.00,388.70 738.70,388.70 735.70,391.70 735.70,408.00 738.70,411.00 685.00,411.00"/>
<text class="m" x="686.40" y="399.40">;</text>
<text class="m" x="686.40" y="408.10">pd dsp 1</text>
<line x1="554.50" y1="221.20" x2="554.50" y2="370.40" stroke="#000" stroke-width="1.6"/>
<line x1="554.50" y1="221.20" x2="562.00" y2="229.50" stroke="#000" stroke-width="1.6"/>
<line x1="561.00" y1="242.50" x2="561.00" y2="253.70" stroke="#000" stroke-width="1.6"/>
<line x1="561.00" y1="242.50" x2="582.50" y2="253.70" stroke="#000" stroke-width="1.6"/>
<line x1="591.00" y1="242.50" x2="582.50" y2="253.70" stroke="#000" stroke-width="1.6"/>
<line x1="591.00" y1="242.50" x2="601.50" y2="253.70" stroke="#000" stroke-width="1.6"/>
<line x1="561.00" y1="266.00" x2="561.00" y2="273.30" stroke="#000" stroke-width="1.6"/>
<line x1="582.50" y1="266.00" x2="561.00" y2="273.30" stroke="#000" stroke-width="1.6"/>
<line x1="561.00" y1="286.40" x2="561.00" y2="290.70" stroke="#000" stroke-width="1.6"/>
<line x1="561.00" y1="303.80" x2="561.00" y2="308.00" stroke="#000" stroke-width="1.6"/>
<line x1="561.00" y1="321.00" x2="700.50" y2="372.50" stroke="#000" stroke-width="1.6"/>
<line x1="685.90" y1="326.00" x2="554.00" y2="370.40" stroke="#000" stroke-width="0.9"/>
<line x1="685.90" y1="326.00" x2="700.50" y2="372.50" stroke="#000" stroke-width="0.9"/>
<line x1="685.90" y1="326.00" x2="686.40" y2="388.70" stroke="#000" stroke-width="0.9"/>
<line x1="701.60" y1="342.00" x2="701.60" y2="345.80" stroke="#000" stroke-width="0.9"/>
<line x1="701.60" y1="358.30" x2="554.00" y2="370.40" stroke="#000" stroke-width="0.9"/>
<line x1="701.60" y1="358.30" x2="700.80" y2="372.50" stroke="#000" stroke-width="0.9"/>
<line x1="701.60" y1="358.30" x2="686.40" y2="388.70" stroke="#000" stroke-width="0.9"/>
<text class="m" x="553.00" y="423.30">At load time, calculate a good choice of fundamental</text>
<text class="m" x="553.00" y="433.70">frequency for showing spectra: the 16th bin in a 4096-point</text>
<text class="m" x="553.00" y="444.10">spectrum, so SR*16/4096 or SR/256.</text>
<rect class="b" x="553.00" y="450.70" width="52.00" height="12.80"/>
<path d="M553.00,462.80 h4.5" stroke="#222" stroke-width="1.3" fill="none"/>
<text class="m" x="554.30" y="459.60">loadbang</text>
<rect class="b" x="553.00" y="467.60" width="12.50" height="12.90"/>
<circle class="b" cx="559.25" cy="474.05" r="5.65"/>
<rect class="b" x="553.00" y="483.50" width="71.00" height="12.80"/>
<path d="M553.00,495.60 h4.5 M553.00,484.20 h4.5" stroke="#222" stroke-width="1.3" fill="none"/>
<text class="m" x="554.30" y="492.40">samplerate~</text>
<rect class="b" x="553.00" y="499.70" width="33.80" height="12.10"/>
<path d="M553.00,511.10 h4.5 M553.00,500.40 h4.5" stroke="#222" stroke-width="1.3" fill="none"/>
<text class="m" x="554.30" y="507.90">/ 256</text>
<polygon class="b" points="553.00,516.00 582.30,516.00 585.80,519.50 585.80,527.60 553.00,527.60"/>
<text class="m" x="554.40" y="524.40">172.2</text>
<rect class="b" x="553.00" y="531.80" width="34.50" height="12.00"/>
<path d="M553.00,543.10 h4.5 M553.00,532.50 h4.5" stroke="#222" stroke-width="1.3" fill="none"/>
<text class="m" x="554.30" y="539.90">t b f</text>
<rect class="b" x="591.90" y="531.80" width="83.50" height="12.00"/>
<path d="M591.90,543.10 h4.5 M591.90,532.50 h4.5" stroke="#222" stroke-width="1.3" fill="none"/>
<text class="m" x="593.20" y="539.90">s fundamental</text>
<polygon class="b" points="553.00,548.20 583.20,548.20 580.20,551.20 580.20,567.20 583.20,570.20 553.00,570.20"/>
<text class="m" x="554.40" y="558.60">;</text>
<text class="m" x="554.40" y="567.30">cm 6</text>
<text class="m" x="558.70" y="579.60">set carrier multiplier after fundamental</text>
<line x1="554.50" y1="463.50" x2="554.50" y2="467.60" stroke="#000" stroke-width="1.0"/>
<line x1="554.50" y1="480.50" x2="554.50" y2="483.50" stroke="#000" stroke-width="1.0"/>
<line x1="554.50" y1="496.30" x2="554.50" y2="499.70" stroke="#000" stroke-width="1.0"/>
<line x1="554.50" y1="511.80" x2="554.50" y2="516.00" stroke="#000" stroke-width="1.0"/>
<line x1="554.50" y1="527.60" x2="554.50" y2="531.80" stroke="#000" stroke-width="1.0"/>
<line x1="554.50" y1="543.80" x2="554.50" y2="547.70" stroke="#000" stroke-width="1.0"/>
<line x1="587.00" y1="543.80" x2="592.50" y2="531.80" stroke="#000" stroke-width="1.0"/>
</svg>
</body></html>
